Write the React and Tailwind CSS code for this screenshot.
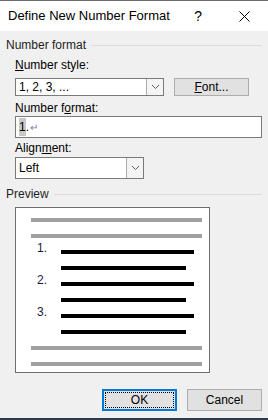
import React from "react";

const font = { fontFamily: '"Liberation Sans", Arial, sans-serif' };

function GroupHeader({ label }) {
  return (
    <div className="flex items-center gap-[5px] pl-[6px] pr-[6px] h-[16px]">
      <span className="text-[12px] leading-[16px] text-[#1e1e1e] whitespace-nowrap">{label}</span>
      <div className="flex-1 h-px bg-[#dcdcdc]" />
    </div>
  );
}

function Chevron() {
  return (
    <svg width="9" height="6" viewBox="0 0 9 6" className="block">
      <path d="M1 1 L4.5 4.5 L8 1" fill="none" stroke="#606060" strokeWidth="1" />
    </svg>
  );
}

function Combo({ value, width, height }) {
  return (
    <div className={`flex bg-white border border-[#7a7a7a] ${width} ${height}`}>
      <div className="flex-1 flex items-center pl-[3px] text-[12px] text-black">{value}</div>
      <div className="w-[17px] flex items-center justify-center bg-[#f4f4f4] border-l border-[#adadad]">
        <Chevron />
      </div>
    </div>
  );
}

function Button({ children, focused }) {
  if (focused) {
    return (
      <div className="w-[75px] h-[22px] border-2 border-[#0078d7] bg-[#e1e1e1] p-px">
        <div className="w-full h-full border border-dotted border-black flex items-center justify-center text-[12px] text-black">
          {children}
        </div>
      </div>
    );
  }
  return (
    <div className="w-[75px] h-[22px] border border-[#adadad] bg-[#e1e1e1] flex items-center justify-center text-[12px] text-black">
      {children}
    </div>
  );
}

function ListItem({ n }) {
  return (
    <>
      <div className="flex items-end h-[4px]">
        <span className="w-[30px] pl-[6px] text-[12px] leading-[11px] text-[#1a1a40]">{n}.</span>
        <div className="w-[133px] h-[4px] bg-black" />
      </div>
      <div className="ml-[30px] w-[125px] h-[4px] bg-black" />
    </>
  );
}

export default function App() {
  return (
    <div style={font} className="w-[268px] h-[420px] bg-[#f0f0f0] flex flex-col overflow-hidden">
      {/* title bar */}
      <div className="h-[31px] bg-white border-t border-[#6b6b6b] flex items-center">
        <span className="pl-[8px] text-[13px] text-black whitespace-nowrap">Define New Number Format</span>
        <span className="ml-auto text-[14px] text-black">?</span>
        <svg width="11" height="11" viewBox="0 0 11 11" className="ml-[37px] mr-[18px]">
          <path d="M0.5 0.5 L10.5 10.5 M10.5 0.5 L0.5 10.5" stroke="#000" strokeWidth="1" />
        </svg>
      </div>

      <div className="mt-[6px]">
        <GroupHeader label="Number format" />
      </div>

      <div className="pl-[15px] mt-[4px] text-[12px] leading-[16px] text-black">
        <span className="underline">N</span>umber style:
      </div>
      <div className="pl-[15px] mt-[5px] flex gap-[10px]">
        <Combo value="1, 2, 3, ..." width="w-[149px]" height="h-[18px]" />
        <div className="w-[75px] h-[18px] border border-[#adadad] bg-[#e1e1e1] flex items-center justify-center text-[12px] text-black">
          <span><span className="underline">F</span>ont...</span>
        </div>
      </div>

      <div className="pl-[15px] mt-[4px] text-[12px] leading-[16px] text-black">
        Number f<span className="underline">o</span>rmat:
      </div>
      <div className="ml-[15px] w-[247px] h-[22px] bg-white border border-[#7a7a7a] flex items-center pl-[3px] text-[12px] text-black">
        <span className="bg-[#c8c8c8]">1</span>
        <span>.</span>
        <span className="text-[10px] text-[#7a80a0] ml-px">↵</span>
      </div>

      <div className="pl-[15px] mt-[2px] text-[12px] leading-[16px] text-black">
        Align<span className="underline">m</span>ent:
      </div>
      <div className="pl-[15px] mt-px">
        <Combo value="Left" width="w-[129px]" height="h-[22px]" />
      </div>

      <div className="mt-[7px]">
        <GroupHeader label="Preview" />
      </div>

      <div className="ml-[15px] mt-[5px] w-[195px] h-[166px] bg-white border border-[#6d6d6d]">
        <div className="flex flex-col gap-[12px] pt-[10px] pl-[15px]">
          <div className="w-[171px] h-[4px] bg-[#a0a0a0]" />
          <div className="w-[171px] h-[4px] bg-[#a0a0a0]" />
          <ListItem n={1} />
          <ListItem n={2} />
          <ListItem n={3} />
          <div className="w-[171px] h-[4px] bg-[#a0a0a0]" />
          <div className="w-[171px] h-[4px] bg-[#a0a0a0]" />
        </div>
      </div>

      <div className="mt-[16px] flex justify-end gap-[10px] pr-[6px]">
        <Button focused>OK</Button>
        <Button>Cancel</Button>
      </div>

      <div className="mt-auto h-[2px] bg-[#2b3a4c]" />
    </div>
  );
}
